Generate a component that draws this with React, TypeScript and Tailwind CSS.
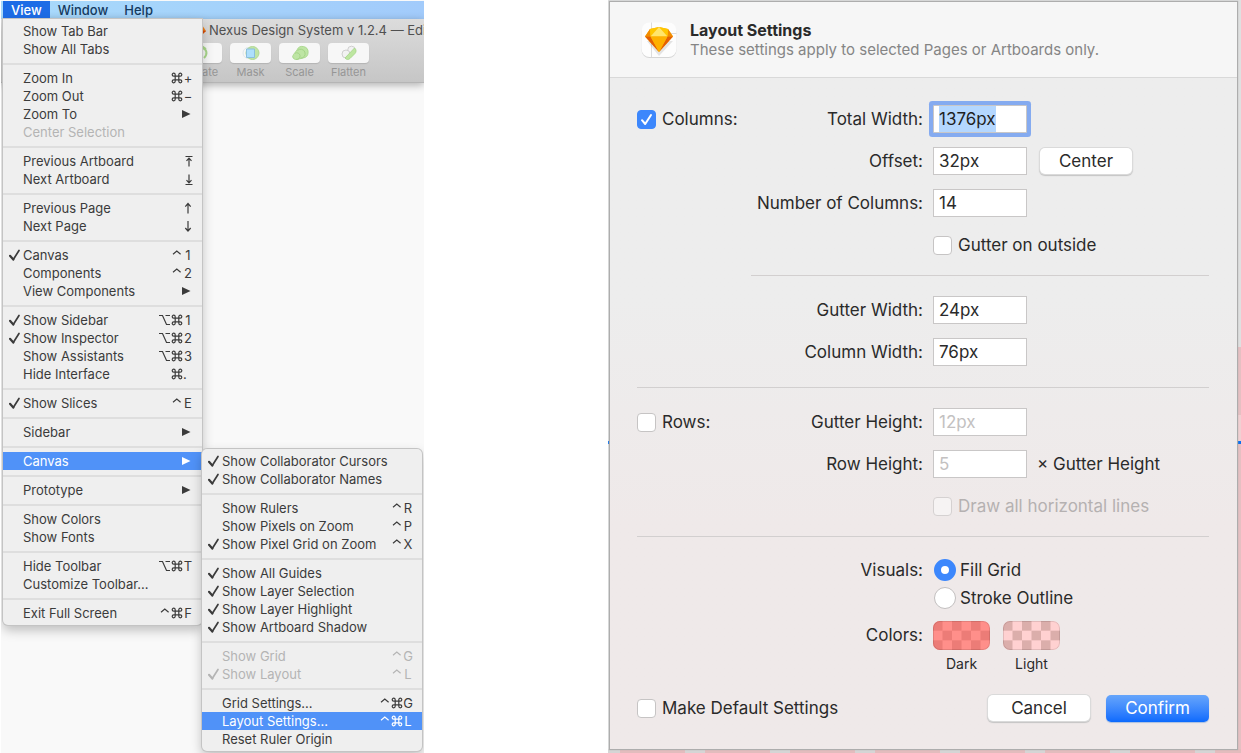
import { useEffect, useRef, type ReactNode } from "react";

type Entry = {
  label: string;
  checked?: boolean;
  mods?: string;
  keyName?: string;
  arrow?: boolean;
  disabled?: boolean;
  active?: boolean;
  submenu?: Entry[][];
};

const canvasMenu: Entry[][] = [
  [
    { label: "Show Collaborator Cursors", checked: true },
    { label: "Show Collaborator Names", checked: true },
  ],
  [
    { label: "Show Rulers", mods: "^", keyName: "R" },
    { label: "Show Pixels on Zoom", mods: "^", keyName: "P" },
    { label: "Show Pixel Grid on Zoom", checked: true, mods: "^", keyName: "X" },
  ],
  [
    { label: "Show All Guides", checked: true },
    { label: "Show Layer Selection", checked: true },
    { label: "Show Layer Highlight", checked: true },
    { label: "Show Artboard Shadow", checked: true },
  ],
  [
    { label: "Show Grid", mods: "^", keyName: "G", disabled: true },
    { label: "Show Layout", checked: true, mods: "^", keyName: "L", disabled: true },
  ],
  [
    { label: "Grid Settings...", mods: "^⌘", keyName: "G" },
    { label: "Layout Settings...", mods: "^⌘", keyName: "L", active: true },
    { label: "Reset Ruler Origin" },
  ],
];

const viewMenu: Entry[][] = [
  [{ label: "Show Tab Bar" }, { label: "Show All Tabs" }],
  [
    { label: "Zoom In", mods: "⌘", keyName: "+" },
    { label: "Zoom Out", mods: "⌘", keyName: "−" },
    { label: "Zoom To", arrow: true },
    { label: "Center Selection", disabled: true },
  ],
  [
    { label: "Previous Artboard", keyName: "top" },
    { label: "Next Artboard", keyName: "bottom" },
  ],
  [
    { label: "Previous Page", keyName: "up" },
    { label: "Next Page", keyName: "down" },
  ],
  [
    { label: "Canvas", checked: true, mods: "^", keyName: "1" },
    { label: "Components", mods: "^", keyName: "2" },
    { label: "View Components", arrow: true },
  ],
  [
    { label: "Show Sidebar", checked: true, mods: "⌥⌘", keyName: "1" },
    { label: "Show Inspector", checked: true, mods: "⌥⌘", keyName: "2" },
    { label: "Show Assistants", mods: "⌥⌘", keyName: "3" },
    { label: "Hide Interface", mods: "⌘", keyName: "." },
  ],
  [{ label: "Show Slices", checked: true, mods: "^", keyName: "E" }],
  [{ label: "Sidebar", arrow: true }],
  [{ label: "Canvas", arrow: true, active: true, submenu: canvasMenu }],
  [{ label: "Prototype", arrow: true }],
  [{ label: "Show Colors" }, { label: "Show Fonts" }],
  [
    { label: "Hide Toolbar", mods: "⌥⌘", keyName: "T" },
    { label: "Customize Toolbar..." },
  ],
  [{ label: "Exit Full Screen", mods: "^⌘", keyName: "F" }],
];

const arrowPaths: Record<string, string> = {
  top: "M2.500 1.500h7M6 11.500V3M3.500 5.800L6 3.200l2.500 2.600",
  bottom: "M2.500 11.500h7M6 1.500V10M3.500 7.200L6 9.800l2.500-2.600",
  up: "M5 11.500V1.500M2.300 4.600L5 1.500l2.700 3.100",
  down: "M5 1V11M2.300 8L5 11l2.700-3",
};

function Modifier({ name }: { name: string }) {
  const path =
    name === "⌘"
      ? "M4.200 4.200h3.600v3.600H4.200zM4.200 4.200H2.700a1.500 1.500 0 1 1 1.500-1.500zM7.800 4.200V2.700a1.500 1.500 0 1 1 1.500 1.500zM7.800 7.800h1.500a1.500 1.500 0 1 1-1.500 1.500zM4.200 7.800v1.500a1.500 1.500 0 1 1-1.500-1.500z"
      : name === "⌥"
        ? "M0 1.500h3.500l4 9H11M6.500 1.500H11"
        : "M2 5.200L5.800 2l3.800 3.200";
  return (
    <svg className="size-3" viewBox="0 0 12 12" fill="none" stroke="currentColor" strokeWidth="1.200">
      <path d={path} />
    </svg>
  );
}

function MenuRow({ entry }: { entry: Entry }) {
  const tone = entry.active
    ? "bg-[#5092f8] text-white"
    : entry.disabled
      ? "text-[#b4b4b4]"
      : "text-[#3b3b3b]";
  return (
    <li className="relative">
      <button
        type="button"
        disabled={entry.disabled}
        className={`flex h-[18px] w-full items-center pr-[9px] text-left ${tone}`}
      >
        <span className="flex w-5 justify-end pr-0.5">
          {entry.checked && (
            <svg className="size-3" viewBox="0 0 12 12" fill="none" stroke="currentColor">
              <path d="M1 6.800L4.300 10.500" strokeWidth="2.200" strokeLinecap="round" />
              <path d="M4.300 10.500L10 1.500" strokeWidth="1.700" strokeLinecap="round" />
            </svg>
          )}
        </span>
        <span className="flex-1 whitespace-nowrap">{entry.label}</span>
        {entry.mods && [...entry.mods].map((m) => <Modifier key={m} name={m} />)}
        {entry.keyName && arrowPaths[entry.keyName] ? (
          <svg className="h-[13px] w-[10px]" viewBox="0 0 10 13" fill="none" stroke="currentColor" strokeWidth="1.200">
            <path d={arrowPaths[entry.keyName]} />
          </svg>
        ) : (
          entry.keyName && (
            <span className={`flex w-[10px] ${entry.keyName === "." ? "justify-start" : "justify-center"}`}>
              {entry.keyName}
            </span>
          )
        )}
        {entry.arrow && (
          <svg className="h-2 w-[11px]" viewBox="0 0 11 8" fill="currentColor">
            <path d="M0 0L8.500 4L0 8z" />
          </svg>
        )}
      </button>
      {entry.submenu && (
        <div className="absolute -top-[3px] left-full z-10 w-[220px]">
          <Menu groups={entry.submenu} rounded="rounded-[5px]" />
        </div>
      )}
    </li>
  );
}

function Menu({ groups, rounded }: { groups: Entry[][]; rounded: string }) {
  return (
    <div
      className={`bg-[#efefef] py-[3px] text-[13px] leading-[18px] shadow-[0_0_0_1px_#c4c4c4,0_5px_12px_rgba(0,0,0,0.25)] ${rounded}`}
    >
      {groups.map((group, i) => (
        <div key={i}>
          {i > 0 && (
            <div className="flex h-[11px] items-center">
              <hr className="h-0.5 w-full border-0 bg-[#dedede]" />
            </div>
          )}
          <ul>
            {group.map((entry) => (
              <MenuRow key={entry.label} entry={entry} />
            ))}
          </ul>
        </div>
      ))}
    </div>
  );
}

function Tool({ label, children }: { label: string; children: ReactNode }) {
  return (
    <button type="button" className="flex w-[41px] flex-col items-center text-[11px] leading-[18px] text-[#969696]">
      <span className="flex h-5 w-full items-center justify-center rounded bg-[#f7f7f7] shadow-[0_1px_1px_rgba(0,0,0,0.12)]">
        <svg className="h-4 w-5" viewBox="0 0 20 16">
          {children}
        </svg>
      </span>
      {label}
    </button>
  );
}

function AppWindow() {
  return (
    <section className="relative ml-px min-h-screen overflow-hidden bg-[#f9f9f9] pt-px">
      <nav className="flex h-[18px] bg-linear-to-r from-[#a8dafb] to-[#a2cbfb] pl-0.5 text-[13px] font-medium leading-[18px] text-[#153a5e]">
        <button type="button" className="bg-[#1d6ce6] px-2 text-white">View</button>
        <button type="button" className="px-2">Window</button>
        <button type="button" className="px-2">Help</button>
      </nav>
      <header className="h-16 overflow-hidden border-b border-[#b5b5b5] bg-linear-to-b from-[#dcdcdc] to-[#c6c6c6] shadow-[0_2px_8px_rgba(0,0,0,0.3)]">
        <div className="flex h-6 items-center gap-[3px] pl-[194px] text-[13px] text-[#505050]">
          <svg className="h-3 w-[11px] shrink-0" viewBox="0 0 11 12">
            <path d="M2 1.500h6l3 4.500-5.500 5L0 6z" fill="#ef7d16" />
            <path d="M5 5l6 1-5.500 5z" fill="#d54b09" />
          </svg>
          <h1 className="whitespace-nowrap">Nexus Design System v 1.2.4 — Edited</h1>
        </div>
        <div className="flex gap-2 pl-[180px]">
          <Tool label="Rotate">
            <path d="M10 3c5 1 6 6 2 10M9 5l2-3 3 2" fill="none" stroke="#a9d78b" strokeWidth="2" />
          </Tool>
          <Tool label="Mask">
            <circle cx="7.500" cy="8" r="5.500" fill="none" stroke="#dfe7ea" />
            <circle cx="11.500" cy="8" r="6.500" fill="#c0e4a5" stroke="#b0d895" />
            <path d="M5.500 4h8v8.500h-8z" fill="#addffc" stroke="#8bbfdc" />
          </Tool>
          <Tool label="Scale">
            <path d="M3.500 13.500a3 3 0 0 1 0-4L7 5a5.800 5.800 0 1 1 6 8l-6 1.500a4 4 0 0 1-3.500-1z" fill="#bee5a4" stroke="#a5d488" strokeWidth="0.800" />
            <path d="M5 8.300a3.300 3.300 0 1 1 1 6M7.500 5.500a4.500 4.500 0 1 1 3 7.700" fill="none" stroke="#a5d488" />
          </Tool>
          <Tool label="Flatten">
            <circle cx="12.500" cy="5" r="3.800" fill="#f2f2f2" stroke="#cfcfcf" />
            <circle cx="7" cy="9" r="4" fill="#f2f2f2" stroke="#cfcfcf" />
            <path d="M6 13L15.500 3c2 1.500 2 4 .5 5.500L11 13.500c-1.500 1.500-3.500 1.300-5-.5z" fill="#bde6a0" stroke="#a5d488" strokeWidth="0.800" />
          </Tool>
        </div>
      </header>
      <div className="absolute left-0.5 top-[19px] w-[199px]">
        <Menu groups={viewMenu} rounded="rounded-b-[5px]" />
      </div>
    </section>
  );
}

function CheckBox({ label, checked, disabled }: { label: string; checked?: boolean; disabled?: boolean }) {
  return (
    <label className={`flex items-center gap-1.5 ${disabled ? "text-[#b5b1b1]" : ""}`}>
      <span className="relative flex size-[19px]">
        <input
          type="checkbox"
          defaultChecked={checked}
          disabled={disabled}
          className="peer size-[19px] appearance-none rounded border border-[#c6c4c4] bg-white checked:border-[#3c87fc] checked:bg-[#3c87fc] disabled:border-[#d5d1d1] disabled:bg-[#f6f3f3]"
        />
        <svg
          className="pointer-events-none absolute inset-0 hidden size-[19px] peer-checked:block"
          viewBox="0 0 19 19"
          fill="none"
          stroke="white"
          strokeWidth="2"
          strokeLinecap="round"
          strokeLinejoin="round"
        >
          <path d="M5 10.200L8.200 14L14 5" />
        </svg>
      </span>
      {label}
    </label>
  );
}

function Radio({ label, checked }: { label: string; checked?: boolean }) {
  return (
    <label className="flex h-7 items-center gap-1">
      <input
        type="radio"
        name="visuals"
        defaultChecked={checked}
        className="size-[22px] appearance-none rounded-full border border-[#c2bfbf] bg-white checked:border-[7px] checked:border-[#3c87fc]"
      />
      {label}
    </label>
  );
}

function Row({ lead, label, htmlFor, children }: { lead?: ReactNode; label?: string; htmlFor?: string; children: ReactNode }) {
  return (
    <div className="flex min-h-7 items-center gap-[10px]">
      <div className="flex w-[286px] shrink-0 items-center justify-between">
        <div>{lead}</div>
        {label && <label htmlFor={htmlFor}>{label}</label>}
      </div>
      {children}
    </div>
  );
}

function Field({ id, value, disabled, selected }: { id: string; value: string; disabled?: boolean; selected?: boolean }) {
  const ref = useRef<HTMLInputElement>(null);
  useEffect(() => {
    if (selected) {
      ref.current?.focus();
      ref.current?.select();
    }
  }, [selected]);
  return (
    <input
      ref={ref}
      id={id}
      defaultValue={value}
      disabled={disabled}
      className={`h-7 w-[94px] border border-[#c9c7c7] bg-white px-[5px] outline-none selection:bg-[#b3d7ff]/99 selection:text-[#1f1f1f] disabled:text-[#c3c1c1] ${
        selected ? "rounded-[1px] shadow-[0_0_0_4px_#85abf0]" : ""
      }`}
    />
  );
}

function Swatch({ label, base, alt }: { label: string; base: string; alt: string }) {
  const cells = [0, 1, 2].flatMap((r) => [0, 1, 2, 3, 4, 5].map((c) => ({ r, c })));
  return (
    <button type="button" className="flex flex-col items-center text-sm leading-7">
      <svg className="h-[29px] w-[57px] rounded-[7px]" viewBox="0 0 60 30" preserveAspectRatio="none">
        <rect width="60" height="30" fill={base} />
        {cells
          .filter(({ r, c }) => (r + c) % 2 === 0)
          .map(({ r, c }) => (
            <rect key={`${r}-${c}`} x={c * 10} y={r * 10} width="10" height="10" fill={alt} />
          ))}
        <rect x="0.5" y="0.5" width="59" height="29" rx="7" fill="none" stroke="#000000" strokeOpacity="0.12" />
      </svg>
      {label}
    </button>
  );
}

function SketchIcon() {
  return (
    <svg className="size-9" viewBox="0 0 36 36">
      <rect x="0.500" y="1.500" width="35" height="34.500" rx="8" fill="#d5d5d5" />
      <rect x="0.500" y="0.500" width="35" height="34.500" rx="8" fill="#fdfdfd" />
      <path d="M10.500 0.500V35M27 11.500h8.500" stroke="#dcdcdc" fill="none" />
      <path d="M18 34L6 19h26z" fill="#000000" opacity="0.1" />
      <path d="M4 14.500L9 7L18 5l9 2l5 7.500L18 30z" fill="#fdad00" />
      <path d="M4 14.500L9 7L9.500 14.500z" fill="#f28c00" />
      <path d="M32 14.500L27 7L26.500 14.500z" fill="#f28c00" />
      <path d="M9 7L18 5L9.500 14.500z" fill="#ffc700" />
      <path d="M27 7L18 5l8.500 9.500z" fill="#ffc700" />
      <path d="M18 5L9.500 14.500h17z" fill="#ffe56b" />
      <path d="M4 14.500h5.500L18 30z" fill="#e35f05" />
      <path d="M32 14.500h-5.500L18 30z" fill="#e35f05" />
      <path d="M9.500 14.500h17L18 30z" fill="#feb000" />
    </svg>
  );
}

function Divider({ className = "" }: { className?: string }) {
  return <hr className={`border-0 border-t border-[#d2cfcf] ${className}`} />;
}

function Dialog() {
  return (
    <section className="relative flex min-h-screen flex-col bg-[#dfe0e0] pb-1 pl-0.5 pr-1 pt-0.5">
      <div className="absolute bottom-0 right-0 top-[347px] w-1 bg-[#e5c0c2]" />
      <div className="absolute right-0 top-[415px] h-[27px] w-1 bg-[#f0d0d2]" />
      <div className="absolute inset-x-0 bottom-0 h-1 bg-[repeating-linear-gradient(90deg,#d5d5d5_0px,#d5d5d5_12px,#e2bcbd_12px,#e2bcbd_77px,#d5d5d5_77px,#d5d5d5_85px)]" />
      <div className="absolute inset-x-0 top-[441px] h-[3px] bg-[#0a72f0]" />
      <form className="relative flex flex-1 flex-col bg-linear-to-b from-[#ededed] from-40% to-[#efe9e9] to-70% text-[17px] leading-7 text-[#2a2a2a] shadow-[0_0_1px_1px_#adadad]">
        <header className="flex h-[76px] items-center gap-[13px] border-b border-[#d9d9d9] bg-[#f6f6f6] pl-[31px]">
          <SketchIcon />
          <div>
            <h2 className="text-base font-bold leading-5">Layout Settings</h2>
            <p className="text-[15px] leading-5 text-[#858585]">These settings apply to selected Pages or Artboards only.</p>
          </div>
        </header>
        <div className="flex flex-1 flex-col pl-[27px] pr-7 pt-[27px]">
          <div className="flex flex-col gap-3.5">
            <Row lead={<CheckBox label="Columns:" checked />} label="Total Width:" htmlFor="total">
              <Field id="total" value="1376px" selected />
            </Row>
            <Row label="Offset:" htmlFor="offset">
              <Field id="offset" value="32px" />
              <button type="button" className="ml-[3px] h-[26px] w-[92px] rounded-[5px] bg-white leading-[26px] shadow-[0_0_0_1px_#dadada,0_1px_1px_1px_#c4c4c4]">
                Center
              </button>
            </Row>
            <Row label="Number of Columns:" htmlFor="count">
              <Field id="count" value="14" />
            </Row>
            <Row>
              <CheckBox label="Gutter on outside" />
            </Row>
          </div>
          <Divider className="ml-[114px] mt-4" />
          <div className="mt-5 flex flex-col gap-3.5">
            <Row label="Gutter Width:" htmlFor="gutter-width">
              <Field id="gutter-width" value="24px" />
            </Row>
            <Row label="Column Width:" htmlFor="column-width">
              <Field id="column-width" value="76px" />
            </Row>
          </div>
          <Divider className="mt-[21px]" />
          <div className="mt-5 flex flex-col gap-3.5">
            <Row lead={<CheckBox label="Rows:" />} label="Gutter Height:" htmlFor="gutter-height">
              <Field id="gutter-height" value="12px" disabled />
            </Row>
            <Row label="Row Height:" htmlFor="row-height">
              <Field id="row-height" value="5" disabled />
              <span>× Gutter Height</span>
            </Row>
            <Row>
              <CheckBox label="Draw all horizontal lines" disabled />
            </Row>
          </div>
          <Divider className="mt-4" />
          <div className="mt-[19px] flex gap-[11px]">
            <div className="w-[286px] text-right">Visuals:</div>
            <div>
              <Radio label="Fill Grid" checked />
              <Radio label="Stroke Outline" />
            </div>
          </div>
          <div className="mt-[9px] flex gap-[10px]">
            <div className="w-[286px] text-right">Colors:</div>
            <div className="flex gap-[13px]">
              <Swatch label="Dark" base="#ff8f8a" alt="#ec7c77" />
              <Swatch label="Light" base="#ffd1d1" alt="#dbaeab" />
            </div>
          </div>
          <div className="mt-4 flex items-center justify-between">
            <CheckBox label="Make Default Settings" />
            <div className="flex gap-4">
              <button type="button" className="h-[26px] w-[102px] rounded-[5px] bg-white leading-[26px] shadow-[0_0_0_1px_#dadada,0_1px_1px_1px_#c4c4c4]">
                Cancel
              </button>
              <button type="submit" className="h-[27px] w-[103px] rounded-[5px] bg-linear-to-b from-[#66a5fb] to-[#0a6afd] leading-[27px] text-white shadow-[0_1px_1px_#a9bfe0]">
                Confirm
              </button>
            </div>
          </div>
        </div>
      </form>
    </section>
  );
}

export default function App() {
  return (
    <main className="grid min-h-screen grid-cols-[424fr_184fr_633fr] bg-white font-['Inter',sans-serif]">
      <AppWindow />
      <div />
      <Dialog />
    </main>
  );
}
